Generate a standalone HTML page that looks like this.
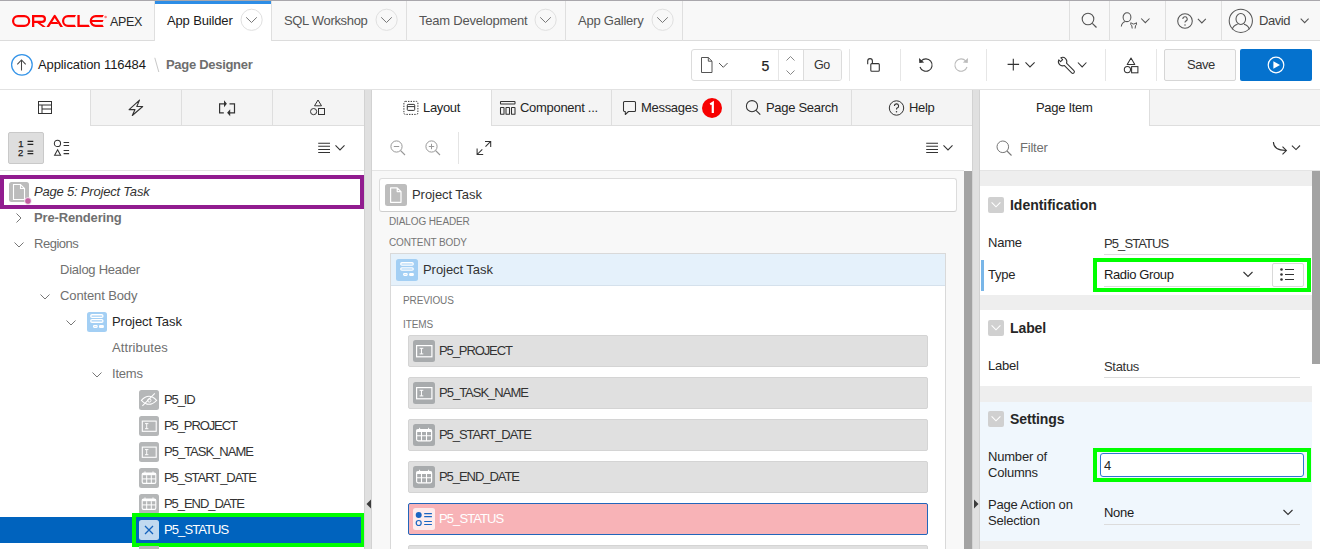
<!DOCTYPE html>
<html><head><meta charset="utf-8">
<style>
*{box-sizing:border-box;margin:0;padding:0}
html,body{width:1320px;height:549px;overflow:hidden;background:#fff;font-family:"Liberation Sans",sans-serif;font-size:13px;color:#262626}
.a{position:absolute}
.t{position:absolute;white-space:nowrap;line-height:16px;font-size:13px;letter-spacing:-0.2px;margin-top:1px}
svg{position:absolute;overflow:visible}
</style></head><body>

<!-- ============ HEADER ============ -->
<div class="a" style="left:0;top:0;width:1320px;height:41px;background:#f8f8f8;border-top:1px solid #a9a7ac;border-bottom:1px solid #dcdcdc"></div>
<!-- Oracle logo -->
<svg style="left:0;top:0" width="120" height="40" viewBox="0 0 120 40">
  <g fill="#ff0000" fill-rule="evenodd">
    <path d="M18 15 H24.3 A6 6 0 0 1 24.3 27 H18 A6 6 0 0 1 18 15 Z M18 17.2 A3.8 3.8 0 0 0 18 24.8 H24.3 A3.8 3.8 0 0 0 24.3 17.2 Z"/>
    <path d="M32 15 H42 A4 4 0 0 1 42 23 H40.4 L45.9 27 H42.7 L37.3 23 H34.3 V27 H32 Z M34.3 17.2 V20.8 H42 A1.8 1.8 0 0 0 42 17.2 Z"/>
    <path d="M46.4 27 L53.5 15.7 Q54.7 14 55.9 15.7 L63 27 H60.3 L54.7 18 L49.1 27 Z M52.2 21.9 H57.4 L58.6 24 H50.9 Z"/>
    <path d="M76 15 H68 A6 6 0 0 0 68 27 H76 L74.8 24.8 H68 A3.8 3.8 0 0 1 68 17.2 H74.8 Z"/>
    <path d="M77.4 15 H79.7 V24.8 H88.7 L89.9 27 H77.4 Z"/>
    <path d="M103.8 15 H95.7 A6 6 0 0 0 95.7 27 H103.8 L102.6 24.8 H95.7 A3.8 3.8 0 0 1 92 22.1 H102.7 L103.5 20 H92 A3.8 3.8 0 0 1 95.7 17.2 H102.6 Z"/>
  </g>
  <circle cx="105.6" cy="17" r="1.3" fill="#ff7a7a"/>
</svg>
<div class="t" style="left:110px;top:13px;color:#2a2a2a;font-size:12.5px;letter-spacing:-0.35px">APEX</div>

<!-- tabs -->
<div class="a" style="left:154px;top:1px;width:1px;height:40px;background:#dfdfdf"></div>
<div class="a" style="left:155px;top:1px;width:116px;height:40px;background:#fff"></div>
<div class="a" style="left:155px;top:1px;width:116px;height:3px;background:#2d8de6"></div>
<div class="a" style="left:271px;top:1px;width:1px;height:40px;background:#dfdfdf"></div>
<div class="a" style="left:406px;top:1px;width:1px;height:40px;background:#dfdfdf"></div>
<div class="a" style="left:565px;top:1px;width:1px;height:40px;background:#dfdfdf"></div>
<div class="a" style="left:682px;top:1px;width:1px;height:40px;background:#dfdfdf"></div>
<div class="t" style="left:167px;top:12px;color:#1a1a1a;letter-spacing:-0.15px">App Builder</div>
<div class="t" style="left:284px;top:12px;color:#555;letter-spacing:-0.33px">SQL Workshop</div>
<div class="t" style="left:419px;top:12px;color:#555;letter-spacing:-0.22px">Team Development</div>
<div class="t" style="left:578px;top:12px;color:#555;letter-spacing:-0.22px">App Gallery</div>
<!-- tab chevron circles -->
<svg style="left:241px;top:9px" width="22" height="22"><circle cx="10.6" cy="10.8" r="10.6" fill="none" stroke="#e0e0e0"/><path d="M5.2 8.3 L10.5 13.5 L15.8 8.3" fill="none" stroke="#777" stroke-width="1"/></svg>
<svg style="left:376px;top:9px" width="22" height="22"><circle cx="10.6" cy="10.8" r="10.6" fill="none" stroke="#e0e0e0"/><path d="M5.2 8.3 L10.5 13.5 L15.8 8.3" fill="none" stroke="#777" stroke-width="1"/></svg>
<svg style="left:535px;top:9px" width="22" height="22"><circle cx="10.6" cy="10.8" r="10.6" fill="none" stroke="#e0e0e0"/><path d="M5.2 8.3 L10.5 13.5 L15.8 8.3" fill="none" stroke="#777" stroke-width="1"/></svg>
<svg style="left:652px;top:9px" width="22" height="22"><circle cx="10.6" cy="10.8" r="10.6" fill="none" stroke="#e0e0e0"/><path d="M5.2 8.3 L10.5 13.5 L15.8 8.3" fill="none" stroke="#777" stroke-width="1"/></svg>

<!-- right header -->
<div class="a" style="left:1069px;top:1px;width:1px;height:40px;background:#dfdfdf"></div>
<div class="a" style="left:1109px;top:1px;width:1px;height:40px;background:#dfdfdf"></div>
<div class="a" style="left:1165px;top:1px;width:1px;height:40px;background:#dfdfdf"></div>
<div class="a" style="left:1221px;top:1px;width:1px;height:40px;background:#dfdfdf"></div>


<!-- header right icons -->
<svg style="left:1081px;top:12px" width="18" height="18"><circle cx="7" cy="7" r="5.8" fill="none" stroke="#555" stroke-width="1.1"/><path d="M11.3 11.3 L15.5 15.5" stroke="#555" stroke-width="1.2"/></svg>
<svg style="left:1115px;top:8px" width="40" height="24"><ellipse cx="12" cy="9.2" rx="3.9" ry="4.4" fill="none" stroke="#555" stroke-width="1.05"/><path d="M6.3 18.5 Q6.8 14.6 10.4 13.6" fill="none" stroke="#555" stroke-width="1.05"/><path d="M16 14.3 Q15 16.5 16.8 17.8 L17.2 20.5 M21.3 14.3 Q22.3 16.5 20.5 17.8 L20.1 20.5 M16.4 15.3 Q18.6 16.8 20.9 15.3" fill="none" stroke="#555" stroke-width="1"/><path d="M26.2 10.5 L30.3 14.7 L34.5 10.5" fill="none" stroke="#555" stroke-width="1.05"/></svg>
<svg style="left:1177px;top:12px" width="36" height="18"><circle cx="8" cy="9" r="7.3" fill="none" stroke="#555" stroke-width="1.05"/><path d="M5.8 7 A2.2 2.2 0 1 1 8.6 9.1 Q8 9.5 8 10.6" fill="none" stroke="#555" stroke-width="1.1"/><circle cx="8" cy="12.9" r="0.75" fill="#555"/><path d="M20.9 6.9 L24.85 10.9 L28.8 6.9" fill="none" stroke="#555" stroke-width="1.05"/></svg>
<svg style="left:1228px;top:8px" width="26" height="26"><circle cx="12.8" cy="12.8" r="11.6" fill="none" stroke="#555" stroke-width="1.05"/><ellipse cx="12.8" cy="11" rx="4.8" ry="5.5" fill="none" stroke="#555" stroke-width="1.05"/><path d="M4.3 21.3 Q5.2 17.2 9.6 16.2 M21.3 21.3 Q20.4 17.2 16 16.2" fill="none" stroke="#555" stroke-width="1.05"/></svg>
<div class="t" style="left:1259px;top:12px;color:#444;letter-spacing:-0.45px">David</div>
<svg style="left:1298px;top:14px" width="14" height="14"><path d="M2.7 4.7 L6.65 8.7 L10.6 4.7" fill="none" stroke="#555" stroke-width="1.05"/></svg>

<!-- ============ TOOLBAR ============ -->
<div class="a" style="left:0;top:89px;width:1320px;height:1px;background:#e2e2e2"></div>


<!-- app icon -->
<svg style="left:11px;top:54px" width="22" height="22"><circle cx="10.9" cy="10.8" r="10.3" fill="none" stroke="#3594e8" stroke-width="1.25"/><path d="M10.5 16.6 V6 M6.3 10.3 L10.5 6 L14.7 10.3" fill="none" stroke="#444" stroke-width="1.05"/></svg>
<div class="t" style="margin-top:0;left:38px;top:57px;color:#1a1a1a;letter-spacing:-0.1px">Application 116484</div>
<svg style="left:153.5px;top:57px" width="7" height="18"><path d="M0.8 0.8 L4.8 15" stroke="#c8c8c8" stroke-width="1"/></svg>
<div class="t" style="margin-top:0;left:166px;top:57px;color:#6e6e6e;font-weight:bold;letter-spacing:-0.3px">Page Designer</div>

<!-- page selector -->
<div class="a" style="left:691px;top:49px;width:151px;height:32px;border:1px solid #dcdcdc;border-radius:3px;background:#fff"></div>
<div class="a" style="left:778px;top:50px;width:1px;height:30px;background:#e6e6e6"></div>
<div class="a" style="left:803px;top:50px;width:38px;height:30px;background:#f8f8f8;border-left:1px solid #dcdcdc;border-radius:0 2px 2px 0"></div>
<svg style="left:700px;top:57px" width="30" height="17"><path d="M1.5 0.5 H8.3 L12 4.2 V15.5 H1.5 Z M8.3 0.5 V4.2 H12" fill="none" stroke="#555" stroke-width="1" stroke-linejoin="round"/><path d="M19 6 L23.3 10.3 L27.6 6" fill="none" stroke="#555" stroke-width="1"/></svg>
<div class="t" style="margin-top:1px;left:754px;top:57px;width:15px;text-align:right;font-size:14px;color:#222;-webkit-text-stroke:0.25px #222">5</div>
<svg style="left:783.5px;top:54.5px" width="14" height="22"><path d="M2.5 5.5 L6.5 1.5 L10.5 5.5 M2.5 15.5 L6.5 19.5 L10.5 15.5" fill="none" stroke="#888" stroke-width="1"/></svg>
<div class="t" style="margin-top:0;left:814px;top:57px;color:#333;font-size:12.5px;letter-spacing:-0.5px">Go</div>

<!-- separators -->
<div class="a" style="left:849px;top:49px;width:1px;height:32px;background:#e6e6e6"></div>
<div class="a" style="left:900px;top:49px;width:1px;height:32px;background:#e6e6e6"></div>
<div class="a" style="left:986px;top:49px;width:1px;height:32px;background:#e6e6e6"></div>
<div class="a" style="left:1105px;top:49px;width:1px;height:32px;background:#e6e6e6"></div>
<div class="a" style="left:1156px;top:49px;width:1px;height:32px;background:#e6e6e6"></div>

<!-- lock -->
<svg style="left:864px;top:56px" width="18" height="18"><path d="M3.7 8.2 V5 A2.35 2.35 0 0 1 8.4 5 V7.5" fill="none" stroke="#333" stroke-width="1.1"/><rect x="6.8" y="7.6" width="8.5" height="7.6" rx="1" fill="none" stroke="#333" stroke-width="1.1"/></svg>
<!-- undo -->
<svg style="left:917px;top:56px" width="18" height="18"><path d="M4.2 5 A6.2 6.2 0 1 1 3 11" fill="none" stroke="#333" stroke-width="1.1"/><path d="M2 2 L2.3 7 L7.2 6.4 Z" fill="#333"/></svg>
<!-- redo -->
<svg style="left:952px;top:56px" width="18" height="18"><path d="M13.8 5 A6.2 6.2 0 1 0 15 11" fill="none" stroke="#bbb" stroke-width="1.1"/><path d="M16 2 L15.7 7 L10.8 6.4 Z" fill="#bbb"/></svg>
<!-- plus/wrench/shapes -->
<svg style="left:990px;top:48px" width="160" height="34"><path d="M23.3 10.7 V22.4 M17.6 16.4 H29.1" stroke="#333" stroke-width="1.1" fill="none"/><path d="M35.5 14.3 L40 18.9 L44.6 14.3" fill="none" stroke="#333" stroke-width="1.05"/>
<path transform="translate(72.6 13.6) rotate(-45)" d="M-1.6 3.9 V14.4 A1.6 1.6 0 0 0 1.6 14.4 V3.9 A4.2 4.2 0 0 0 1.5 -3.92 V-1.4 H-1.5 V-3.92 A4.2 4.2 0 0 0 -1.6 3.9 Z" fill="none" stroke="#333" stroke-width="1.05" stroke-linejoin="round"/>
<path d="M87.9 14.5 L92.15 18.9 L96.4 14.5" fill="none" stroke="#333" stroke-width="1.05"/>
<path d="M141 10 L144.8 16.4 H137.2 Z" fill="none" stroke="#333" stroke-width="1.05" stroke-linejoin="round"/><circle cx="137.4" cy="21.6" r="3.1" fill="none" stroke="#333" stroke-width="1.05"/><rect x="141.6" y="18.6" width="6.3" height="6.2" fill="none" stroke="#333" stroke-width="1.05"/></svg>
<!-- save -->
<div class="a" style="left:1164px;top:49px;width:72px;height:32px;border:1px solid #d6d6d6;border-radius:2px;background:#f8f8f8"></div>
<div class="t" style="margin-top:0;left:1187px;top:57px;color:#333;letter-spacing:-0.5px">Save</div>
<!-- run -->
<div class="a" style="left:1240px;top:49px;width:72px;height:32px;border-radius:2px;background:#0572ce"></div>
<svg style="left:1267px;top:56px" width="20" height="18"><circle cx="9" cy="9" r="7.8" fill="none" stroke="#fff" stroke-width="1.2"/><path d="M6.4 5.3 L13 9 L6.4 12.7 Z" fill="#fff"/></svg>

<!-- ============ PANELS ============ -->

<!-- ===== LEFT PANEL ===== -->
<div class="a" style="left:0;top:90px;width:364px;height:36px;background:#f4f4f4;border-bottom:1px solid #dedede"></div>
<div class="a" style="left:0;top:90px;width:90px;height:36px;background:#fff"></div>
<div class="a" style="left:90px;top:90px;width:1px;height:36px;background:#dedede"></div>
<div class="a" style="left:181px;top:90px;width:1px;height:35px;background:#dedede"></div>
<div class="a" style="left:272px;top:90px;width:1px;height:35px;background:#dedede"></div>
<!-- tab icons -->
<svg style="left:37px;top:100px" width="16" height="16"><rect x="1.5" y="1.5" width="13" height="12" fill="none" stroke="#333" stroke-width="1"/><path d="M1.5 5 H14.5 M5 5 V13.5 M5 9 H14.5" fill="none" stroke="#333" stroke-width="1"/></svg>
<svg style="left:128px;top:99px" width="18" height="18"><path d="M11.5 1.1 L1.1 10.6 H7 L4.3 16.5 L14.7 7.5 H8.8 Z" fill="none" stroke="#333" stroke-width="1.1" stroke-linejoin="round"/></svg>
<svg style="left:217px;top:98px" width="20" height="20"><path d="M7.5 5.8 H2.6 V14.8 H6.8 M12.5 5.8 H17.5 V14.8 H12.8" fill="none" stroke="#333" stroke-width="1.2"/><path d="M7 2.3 L9.9 5.8 L7 9.3 Z M13.2 11.3 L10.1 14.8 L13.2 18.3 Z" fill="#333"/></svg>
<svg style="left:309px;top:99px" width="18" height="18"><path d="M9 1 L12.5 6.8 H5.5 Z" fill="none" stroke="#333" stroke-width="1"/><circle cx="4.6" cy="12.6" r="3.1" fill="none" stroke="#333" stroke-width="1"/><rect x="9.5" y="9.5" width="6" height="6" fill="none" stroke="#333" stroke-width="1"/></svg>
<!-- left toolbar -->
<div class="a" style="left:0;top:170px;width:364px;height:1px;background:#e4e4e4"></div>
<div class="a" style="left:8px;top:132px;width:36px;height:32px;background:#dedede;border:1px solid #c9c9c9;border-radius:2px"></div>
<svg style="left:16px;top:138px" width="22" height="20"><text x="2.3" y="8.7" font-family="Liberation Sans" font-size="9.5" fill="#222" stroke="#222" stroke-width="0.25">1</text><text x="2" y="17.9" font-family="Liberation Sans" font-size="9.5" fill="#222" stroke="#222" stroke-width="0.25">2</text><path d="M11.5 3.4 H17.3 M11.5 6.3 H17.3 M11.5 13 H17.3 M11.5 15.6 H17.3" stroke="#222" stroke-width="1.25"/></svg>
<svg style="left:53px;top:138px" width="22" height="20"><circle cx="4.45" cy="5.4" r="3.1" fill="none" stroke="#333" stroke-width="1.05"/><path d="M4.6 11.8 L7.6 17.3 H1.6 Z" fill="none" stroke="#333" stroke-width="1.05"/><path d="M10.6 4.5 H16.1 M10.6 7.4 H16.1 M10.6 12.4 H16.1 M10.6 15.6 H16.1" stroke="#333" stroke-width="1.05"/></svg>
<svg style="left:317px;top:140px" width="30" height="16"><path d="M1.2 3.2 H13 M1.2 6.3 H13 M1.2 9.4 H13 M1.2 12.5 H13" stroke="#333" stroke-width="1.05"/><path d="M18.5 5.3 L23 9.9 L27.5 5.3" fill="none" stroke="#333" stroke-width="1.05"/></svg>

<!-- tree -->
<div class="a" style="left:0;top:175px;width:364px;height:34px;border:4px solid #911c8f;background:#fff"></div>
<svg style="left:9px;top:182px" width="24" height="24"><rect x="0" y="0" width="20" height="20" rx="2.5" fill="#bcbcbc"/><path d="M4.5 2.5 H11.5 L15.5 6.5 V17.5 H4.5 Z M11.5 2.5 V6.5 H15.5" fill="none" stroke="#fff" stroke-width="1.1"/><circle cx="19" cy="19" r="3.4" fill="#c25ea0" stroke="#fff" stroke-width="0.8"/></svg>
<div class="t" style="left:34px;top:183px;color:#333;font-style:italic;letter-spacing:-0.2px">Page 5: Project Task</div>

<svg style="left:14px;top:212px" width="10" height="12"><path d="M2.5 1.5 L7 6 L2.5 10.5" fill="none" stroke="#777" stroke-width="1"/></svg>
<div class="t" style="left:34px;top:209px;color:#707070;font-weight:bold;letter-spacing:-0.15px">Pre-Rendering</div>
<svg style="left:13px;top:240px" width="12" height="10"><path d="M1.5 2.5 L6 7 L10.5 2.5" fill="none" stroke="#777" stroke-width="1"/></svg>
<div class="t" style="left:34px;top:235px;color:#707070;letter-spacing:-0.48px">Regions</div>
<div class="t" style="left:60px;top:261px;color:#707070;letter-spacing:-0.25px">Dialog Header</div>
<svg style="left:39px;top:292px" width="12" height="10"><path d="M1.5 2.5 L6 7 L10.5 2.5" fill="none" stroke="#777" stroke-width="1"/></svg>
<div class="t" style="left:60px;top:287px;color:#707070;letter-spacing:-0.12px">Content Body</div>
<svg style="left:65px;top:318px" width="12" height="10"><path d="M1.5 2.5 L6 7 L10.5 2.5" fill="none" stroke="#777" stroke-width="1"/></svg>
<svg style="left:87px;top:312px" width="20" height="20"><rect x="0" y="0" width="20" height="20" rx="2.5" fill="#a3cff4"/><g fill="none" stroke="#fff" stroke-width="1.3"><rect x="3.75" y="2.75" width="12.2" height="2.6" rx="1.3"/><rect x="3.75" y="7.65" width="12.2" height="2.6" rx="1.3"/><rect x="6.5" y="13.7" width="3.7" height="1.6" rx="0.8" stroke-width="1.2"/></g><rect x="12" y="13.1" width="4.9" height="2.8" rx="1" fill="#fff"/></svg>
<div class="t" style="left:112px;top:313px;color:#262626;letter-spacing:-0.06px">Project Task</div>
<div class="t" style="left:112px;top:339px;color:#707070;letter-spacing:0.1px">Attributes</div>
<svg style="left:91px;top:370px" width="12" height="10"><path d="M1.5 2.5 L6 7 L10.5 2.5" fill="none" stroke="#777" stroke-width="1"/></svg>
<div class="t" style="left:112px;top:365px;color:#707070;letter-spacing:-0.2px">Items</div>

<!-- items -->
<svg style="left:139px;top:390px" width="20" height="20"><rect width="20" height="20" rx="2.5" fill="#b5b7b8"/><path d="M2.4 10.3 Q10 2.3 17.6 10.3 Q10 18.3 2.4 10.3 Z" fill="none" stroke="#fff" stroke-width="1.05"/><circle cx="10.3" cy="10.4" r="1.7" fill="none" stroke="#fff" stroke-width="1"/><path d="M3.4 15.8 L15.8 3.4" stroke="#fff" stroke-width="1.05"/></svg>
<div class="t" style="left:164px;top:391px;color:#333;letter-spacing:-1.1px">P5_ID</div>
<svg style="left:139px;top:416px" width="20" height="20"><rect width="20" height="20" rx="2.5" fill="#b5b7b8"/><rect x="3.3" y="5.1" width="13.9" height="10.2" fill="none" stroke="#fff" stroke-width="1.1"/><path d="M6 7.6 H9.4 M7.7 7.6 V12.7 M6 12.7 H9.4" stroke="#fff" stroke-width="0.95"/></svg>
<div class="t" style="left:164px;top:417px;color:#333;letter-spacing:-1.1px">P5_PROJECT</div>
<svg style="left:139px;top:442px" width="20" height="20"><rect width="20" height="20" rx="2.5" fill="#b5b7b8"/><rect x="3.3" y="5.1" width="13.9" height="10.2" fill="none" stroke="#fff" stroke-width="1.1"/><path d="M6 7.6 H9.4 M7.7 7.6 V12.7 M6 12.7 H9.4" stroke="#fff" stroke-width="0.95"/></svg>
<div class="t" style="left:164px;top:443px;color:#333;letter-spacing:-1.0px">P5_TASK_NAME</div>
<svg style="left:139px;top:468px" width="20" height="20"><rect width="20" height="20" rx="2.5" fill="#b5b7b8"/><rect x="3.2" y="5" width="13.6" height="10.4" rx="1.3" fill="none" stroke="#fff" stroke-width="1.1"/><path d="M3.2 6.1 H16.8" stroke="#fff" stroke-width="2.2"/><path d="M7.7 7.2 V15.4 M12.3 7.2 V15.4 M3.2 10.9 H16.8" stroke="#fff" stroke-width="1"/><path d="M6 3.4 V5.9 M14 3.4 V5.9" stroke="#fff" stroke-width="0.9"/></svg>
<div class="t" style="left:164px;top:469px;color:#333;letter-spacing:-1.05px">P5_START_DATE</div>
<svg style="left:139px;top:494px" width="20" height="20"><rect width="20" height="20" rx="2.5" fill="#b5b7b8"/><rect x="3.2" y="5" width="13.6" height="10.4" rx="1.3" fill="none" stroke="#fff" stroke-width="1.1"/><path d="M3.2 6.1 H16.8" stroke="#fff" stroke-width="2.2"/><path d="M7.7 7.2 V15.4 M12.3 7.2 V15.4 M3.2 10.9 H16.8" stroke="#fff" stroke-width="1"/><path d="M6 3.4 V5.9 M14 3.4 V5.9" stroke="#fff" stroke-width="0.9"/></svg>
<div class="t" style="left:164px;top:495px;color:#333;letter-spacing:-1.05px">P5_END_DATE</div>
<!-- selected -->
<div class="a" style="left:0;top:517px;width:364px;height:26px;background:#0063be"></div>
<div class="a" style="left:132px;top:513px;width:233px;height:34px;border:4px solid #00ff00"></div>
<svg style="left:139px;top:520px" width="20" height="20"><rect width="20" height="20" rx="2.5" fill="#c1d9f0"/><path d="M6 6 L14 14 M14 6 L6 14" stroke="#1563bd" stroke-width="1.3"/></svg>
<div class="t" style="left:164px;top:521px;color:#fff;letter-spacing:-0.9px">P5_STATUS</div>
<div class="a" style="left:139px;top:546px;width:20px;height:4px;background:#b5b7b8"></div>


<!-- ===== MIDDLE PANEL ===== -->
<div class="a" style="left:372px;top:90px;width:600px;height:36px;background:#f4f4f4;border-bottom:1px solid #dedede"></div>
<div class="a" style="left:372px;top:90px;width:119px;height:36px;background:#fff"></div>
<div class="a" style="left:491px;top:90px;width:1px;height:36px;background:#dedede"></div>
<div class="a" style="left:611px;top:90px;width:1px;height:35px;background:#dedede"></div>
<div class="a" style="left:731px;top:90px;width:1px;height:35px;background:#dedede"></div>
<div class="a" style="left:851px;top:90px;width:1px;height:35px;background:#dedede"></div>
<svg style="left:402px;top:100px" width="18" height="17"><rect x="1.9" y="1.4" width="14" height="13" rx="1.5" fill="none" stroke="#333" stroke-width="1" stroke-dasharray="1.4 1.2"/><rect x="5.3" y="4.4" width="7.4" height="6" rx="0.8" fill="none" stroke="#333" stroke-width="1"/><path d="M5.3 6.6 H12.7" stroke="#333" stroke-width="1"/></svg>
<div class="t" style="margin-top:0;left:423px;top:100px;color:#262626;letter-spacing:-0.33px">Layout</div>
<svg style="left:499px;top:100px" width="18" height="17"><g fill="none" stroke="#333" stroke-width="1.05"><rect x="1.5" y="1.5" width="14.5" height="2.5" rx="0.5"/><rect x="1.5" y="7.5" width="3.5" height="6.8" rx="0.4"/><rect x="7" y="7.5" width="3.5" height="6.8" rx="0.4"/><rect x="12.5" y="7.5" width="3.5" height="6.8" rx="0.4"/></g></svg>
<div class="t" style="margin-top:0;left:520px;top:100px;color:#262626;letter-spacing:-0.3px">Component ...</div>
<svg style="left:622px;top:100px" width="16" height="17"><path d="M2.5 1.5 H12.5 A1 1 0 0 1 13.5 2.5 V10.5 A1 1 0 0 1 12.5 11.5 H6.5 L3.3 14.5 V11.5 H2.5 A1 1 0 0 1 1.5 10.5 V2.5 A1 1 0 0 1 2.5 1.5 Z" fill="none" stroke="#333" stroke-width="1.05" stroke-linejoin="round"/></svg>
<div class="t" style="margin-top:0;left:641px;top:100px;color:#262626;letter-spacing:-0.3px">Messages</div>
<svg style="left:701px;top:97px" width="22" height="22"><circle cx="11" cy="11" r="10" fill="#f70000"/><path d="M9.2 7.4 L11.8 5.8 V16" fill="none" stroke="#fff" stroke-width="2.2"/></svg>
<svg style="left:745px;top:99px" width="18" height="18"><circle cx="7" cy="7.2" r="5.6" fill="none" stroke="#333" stroke-width="1.05"/><path d="M11 11.3 L15.3 15.6" stroke="#333" stroke-width="1.1"/></svg>
<div class="t" style="margin-top:0;left:766px;top:100px;color:#262626;letter-spacing:-0.3px">Page Search</div>
<svg style="left:888px;top:99px" width="18" height="18"><circle cx="8.5" cy="9" r="7.2" fill="none" stroke="#333" stroke-width="1"/><path d="M6.4 7 A2.1 2.1 0 1 1 9.1 9 Q8.5 9.4 8.5 10.6" fill="none" stroke="#333" stroke-width="1.1"/><circle cx="8.5" cy="12.8" r="0.75" fill="#333"/></svg>
<div class="t" style="margin-top:0;left:909px;top:100px;color:#262626;letter-spacing:-0.3px">Help</div>

<div class="a" style="left:372px;top:170px;width:592px;height:1px;background:#e4e4e4"></div>
<svg style="left:390px;top:140px" width="17" height="17"><circle cx="6.5" cy="6.5" r="5.6" fill="none" stroke="#999" stroke-width="1"/><path d="M3.8 6.5 H9.2" stroke="#999" stroke-width="1"/><path d="M10.5 10.5 L15 15" stroke="#999" stroke-width="1.1"/></svg>
<svg style="left:425px;top:140px" width="17" height="17"><circle cx="6.5" cy="6.5" r="5.6" fill="none" stroke="#999" stroke-width="1"/><path d="M3.8 6.5 H9.2 M6.5 3.8 V9.2" stroke="#999" stroke-width="1"/><path d="M10.5 10.5 L15 15" stroke="#999" stroke-width="1.1"/></svg>
<div class="a" style="left:458px;top:132px;width:1px;height:32px;background:#e4e4e4"></div>
<svg style="left:476px;top:140px" width="16" height="16"><path d="M9 1.4 H14.7 V7 M14.7 1.4 L9.5 6.6 M1.1 8.5 V14.5 H7.2 M1.1 14.5 L6.3 9.3" fill="none" stroke="#333" stroke-width="1.05"/></svg>
<svg style="left:925px;top:140px" width="30" height="16"><path d="M1.2 3.2 H13 M1.2 6.3 H13 M1.2 9.4 H13 M1.2 12.5 H13" stroke="#333" stroke-width="1.05"/><path d="M18.5 5.3 L23 9.9 L27.5 5.3" fill="none" stroke="#333" stroke-width="1.05"/></svg>

<!-- canvas -->
<div class="a" style="left:372px;top:171px;width:592px;height:378px;background:#f8f8f8"></div>
<div class="a" style="left:964px;top:171px;width:8px;height:378px;background:#a3a3a3"></div>
<div class="a" style="left:379px;top:178px;width:578px;height:34px;background:#fff;border:1px solid #dcdcdc;border-bottom-color:#cecece;border-radius:3px"></div>
<svg style="left:385px;top:184px" width="22" height="22"><rect width="22" height="22" rx="2.5" fill="#bdbdbd"/><path d="M5.6 3.8 H12.2 L16 7.6 V18.3 H5.6 Z M12.2 3.8 V7.6 H16" fill="none" stroke="#fff" stroke-width="1.2" stroke-linejoin="round"/></svg>
<div class="t" style="left:412px;top:186px;color:#333;letter-spacing:-0.06px">Project Task</div>
<div class="t" style="left:389px;top:215px;color:#757575;font-size:10px;line-height:12px;letter-spacing:-0.12px">DIALOG HEADER</div>
<div class="t" style="left:389px;top:236px;color:#757575;font-size:10px;line-height:12px;letter-spacing:-0.12px">CONTENT BODY</div>
<div class="a" style="left:390px;top:253px;width:556px;height:296px;background:#fff;border:1px solid #d9d9d9;border-bottom:none"></div>
<div class="a" style="left:391px;top:254px;width:554px;height:32px;background:#e5f1fb;border-bottom:1px solid #d5e1ec"></div>
<svg style="left:396px;top:259px" width="22" height="22"><rect width="22" height="22" rx="2.5" fill="#a3cff4"/><g fill="none" stroke="#fff" stroke-width="1.3"><rect x="4.75" y="3.75" width="12.5" height="2.3" rx="1.15"/><rect x="4.75" y="8.85" width="12.5" height="2.3" rx="1.15"/><rect x="7.6" y="14.7" width="3.6" height="1.6" rx="0.8" stroke-width="1.2"/></g><rect x="13.1" y="14.1" width="4.8" height="2.8" rx="1.2" fill="#fff"/></svg>
<div class="t" style="left:423px;top:261px;color:#333;letter-spacing:-0.06px">Project Task</div>
<div class="t" style="left:403px;top:294px;color:#757575;font-size:10px;line-height:12px;letter-spacing:-0.12px">PREVIOUS</div>
<div class="t" style="left:403px;top:318px;color:#757575;font-size:10px;line-height:12px;letter-spacing:-0.12px">ITEMS</div>
<div class="a" style="left:408px;top:335px;width:520px;height:32px;background:#e0e0e0;border:1px solid #d4d4d4;border-radius:2px"></div>
<svg style="left:413px;top:340px" width="22" height="22"><rect width="22" height="22" rx="2.5" fill="#a8abad"/><rect x="3.6" y="5.6" width="15.3" height="11.2" fill="none" stroke="#fff" stroke-width="1.2"/><path d="M6.6 8.3 H10.3 M8.45 8.3 V13.9 M6.6 13.9 H10.3" stroke="#fff" stroke-width="1"/></svg>
<div class="t" style="margin-top:0;left:439px;top:343px;color:#333;letter-spacing:-1.1px">P5_PROJECT</div>
<div class="a" style="left:408px;top:377px;width:520px;height:32px;background:#e0e0e0;border:1px solid #d4d4d4;border-radius:2px"></div>
<svg style="left:413px;top:382px" width="22" height="22"><rect width="22" height="22" rx="2.5" fill="#a8abad"/><rect x="3.6" y="5.6" width="15.3" height="11.2" fill="none" stroke="#fff" stroke-width="1.2"/><path d="M6.6 8.3 H10.3 M8.45 8.3 V13.9 M6.6 13.9 H10.3" stroke="#fff" stroke-width="1"/></svg>
<div class="t" style="margin-top:0;left:439px;top:385px;color:#333;letter-spacing:-1.0px">P5_TASK_NAME</div>
<div class="a" style="left:408px;top:419px;width:520px;height:32px;background:#e0e0e0;border:1px solid #d4d4d4;border-radius:2px"></div>
<svg style="left:413px;top:424px" width="22" height="22"><rect width="22" height="22" rx="2.5" fill="#a8abad"/><rect x="3.6" y="5.6" width="15" height="11.2" rx="1.5" fill="none" stroke="#fff" stroke-width="1.2"/><path d="M3.6 6.8 H18.6" stroke="#fff" stroke-width="2.4"/><path d="M8.5 8 V16.8 M13.5 8 V16.8 M3.6 11.8 H18.6" stroke="#fff" stroke-width="1.1"/><path d="M6.6 3.8 V6.5 M15.6 3.8 V6.5" stroke="#fff" stroke-width="1"/></svg>
<div class="t" style="margin-top:0;left:439px;top:427px;color:#333;letter-spacing:-1.05px">P5_START_DATE</div>
<div class="a" style="left:408px;top:461px;width:520px;height:32px;background:#e0e0e0;border:1px solid #d4d4d4;border-radius:2px"></div>
<svg style="left:413px;top:466px" width="22" height="22"><rect width="22" height="22" rx="2.5" fill="#a8abad"/><rect x="3.6" y="5.6" width="15" height="11.2" rx="1.5" fill="none" stroke="#fff" stroke-width="1.2"/><path d="M3.6 6.8 H18.6" stroke="#fff" stroke-width="2.4"/><path d="M8.5 8 V16.8 M13.5 8 V16.8 M3.6 11.8 H18.6" stroke="#fff" stroke-width="1.1"/><path d="M6.6 3.8 V6.5 M15.6 3.8 V6.5" stroke="#fff" stroke-width="1"/></svg>
<div class="t" style="margin-top:0;left:439px;top:469px;color:#333;letter-spacing:-1.05px">P5_END_DATE</div>
<div class="a" style="left:408px;top:503px;width:520px;height:32px;background:#f8b3b7;border:1px solid #2266bb;border-radius:2px"></div>
<svg style="left:413px;top:508px" width="22" height="22"><rect width="22" height="22" rx="2.5" fill="#fdeced"/><circle cx="5.7" cy="6.9" r="3" fill="#1a66c2"/><circle cx="5.7" cy="15" r="2.5" fill="none" stroke="#1a66c2" stroke-width="1.2"/><path d="M11.2 5.6 H18.9 M11.2 8.6 H18.9 M11.2 13.5 H18.9 M11.2 16.5 H18.9" stroke="#1a66c2" stroke-width="1.2"/></svg>
<div class="t" style="margin-top:0;left:439px;top:511px;color:#fff;letter-spacing:-0.9px">P5_STATUS</div>
<div class="a" style="left:408px;top:545px;width:520px;height:10px;background:#e0e0e0;border:1px solid #d4d4d4;border-radius:2px"></div>


<!-- ===== RIGHT PANEL ===== -->
<div class="a" style="left:980px;top:90px;width:340px;height:36px;background:#f4f4f4;border-bottom:1px solid #dedede"></div>
<div class="a" style="left:980px;top:90px;width:169px;height:36px;background:#fff"></div>
<div class="a" style="left:1149px;top:90px;width:1px;height:36px;background:#dedede"></div>
<div class="t" style="margin-top:0;left:1036px;top:100px;color:#262626;letter-spacing:-0.3px">Page Item</div>
<svg style="left:996px;top:140px" width="17" height="17"><circle cx="6.8" cy="6.8" r="5.8" fill="none" stroke="#777" stroke-width="1"/><path d="M11 11 L15.5 15.5" stroke="#777" stroke-width="1.1"/></svg>
<div class="t" style="left:1020px;top:139px;color:#6f6f6f;letter-spacing:-0.2px">Filter</div>
<svg style="left:1265px;top:135px" width="40" height="24"><path d="M8.4 7.1 Q8.6 15.5 21 15.5" fill="none" stroke="#333" stroke-width="1.1"/><path d="M17.5 11.6 L21.4 15.5 L17.5 19.4" fill="none" stroke="#333" stroke-width="1.1"/><path d="M26.9 10.7 L31 14.6 L35 10.5" fill="none" stroke="#333" stroke-width="1.1"/></svg>
<div class="a" style="left:980px;top:170px;width:340px;height:1px;background:#e4e4e4"></div>
<div class="a" style="left:980px;top:171px;width:332px;height:378px;background:#eeeeee"></div>
<div class="a" style="left:1312px;top:171px;width:8px;height:193px;background:#a3a3a3"></div>
<div class="a" style="left:1312px;top:364px;width:8px;height:185px;background:#fff"></div>

<!-- identification -->
<div class="a" style="left:980px;top:186px;width:332px;height:109px;background:#fff"></div>
<div class="a" style="left:988px;top:197px;width:16px;height:16px;background:#d0d0d0;border-radius:2px"></div>
<svg style="left:988px;top:197px" width="16" height="16"><path d="M3.6 5.4 L8 9.8 L12.4 5.4" fill="none" stroke="#fff" stroke-width="1.1"/></svg>
<div class="t" style="margin-top:0;left:1010px;top:197px;color:#262626;font-size:14px;line-height:17px;font-weight:bold;letter-spacing:-0.03px">Identification</div>
<div class="t" style="left:988px;top:234px;color:#262626;letter-spacing:-0.2px">Name</div>
<div class="t" style="left:1104px;top:235px;color:#333;letter-spacing:-0.9px">P5_STATUS</div>
<div class="a" style="left:1104px;top:254px;width:196px;height:1px;background:#dcdcdc"></div>
<div class="a" style="left:981px;top:260px;width:3px;height:31px;background:#79b6e8"></div>
<div class="t" style="left:988px;top:266px;color:#262626;letter-spacing:-0.2px">Type</div>
<div class="a" style="left:1093px;top:258px;width:218px;height:34px;border:4px solid #00ff00"></div>
<div class="t" style="left:1104px;top:266px;color:#1a1a1a;letter-spacing:-0.38px">Radio Group</div>
<svg style="left:1242px;top:269px" width="14" height="12"><path d="M1.5 3 L6 7.5 L10.5 3" fill="none" stroke="#333" stroke-width="1.1"/></svg>
<div class="a" style="left:1104px;top:286px;width:156px;height:1px;background:#dcdcdc"></div>
<div class="a" style="left:1272px;top:263px;width:32px;height:24px;border:1px solid #d9d9d9;border-radius:2px;background:#fff"></div>
<svg style="left:1279px;top:267px" width="18" height="16"><circle cx="2.5" cy="2.5" r="1.3" fill="#333"/><circle cx="2.5" cy="7.5" r="1.3" fill="#333"/><circle cx="2.5" cy="12.5" r="1.3" fill="#333"/><path d="M6 2.5 H15 M6 7.5 H15 M6 12.5 H15" stroke="#333" stroke-width="1"/></svg>

<!-- label -->
<div class="a" style="left:980px;top:310px;width:332px;height:76px;background:#fff"></div>
<div class="a" style="left:988px;top:320px;width:16px;height:16px;background:#d0d0d0;border-radius:2px"></div>
<svg style="left:988px;top:320px" width="16" height="16"><path d="M3.6 5.4 L8 9.8 L12.4 5.4" fill="none" stroke="#fff" stroke-width="1.1"/></svg>
<div class="t" style="margin-top:0;left:1010px;top:320px;color:#262626;font-size:14px;line-height:17px;font-weight:bold;letter-spacing:-0.1px">Label</div>
<div class="t" style="margin-top:0;left:988px;top:358px;color:#262626;letter-spacing:-0.2px">Label</div>
<div class="t" style="left:1104px;top:358px;color:#333;letter-spacing:-0.3px">Status</div>
<div class="a" style="left:1104px;top:377px;width:196px;height:1px;background:#dcdcdc"></div>

<!-- settings -->
<div class="a" style="left:980px;top:402px;width:332px;height:139px;background:#f0f7fd"></div>
<div class="a" style="left:988px;top:411px;width:16px;height:16px;background:#d0d0d0;border-radius:2px"></div>
<svg style="left:988px;top:411px" width="16" height="16"><path d="M3.6 5.4 L8 9.8 L12.4 5.4" fill="none" stroke="#fff" stroke-width="1.1"/></svg>
<div class="t" style="margin-top:0;left:1010px;top:411px;color:#262626;font-size:14px;line-height:17px;font-weight:bold;letter-spacing:-0.1px">Settings</div>
<div class="t" style="left:988px;top:448px;color:#262626;letter-spacing:-0.2px;line-height:16px">Number of<br>Columns</div>
<div class="a" style="left:1093px;top:448px;width:218px;height:34px;border:4px solid #00ff00"></div>
<div class="a" style="left:1100px;top:453px;width:204px;height:24px;border:1px solid #2f78d2;border-radius:3px;background:#fff"></div>
<div class="t" style="left:1104px;top:457px;color:#262626">4</div>
<div class="t" style="left:988px;top:496px;color:#262626;letter-spacing:-0.2px;line-height:16px">Page Action on<br>Selection</div>
<div class="t" style="left:1104px;top:504px;color:#1a1a1a;letter-spacing:-0.3px">None</div>
<svg style="left:1282px;top:507px" width="14" height="12"><path d="M1.5 3 L6 7.5 L10.5 3" fill="none" stroke="#333" stroke-width="1.1"/></svg>
<div class="a" style="left:1104px;top:524px;width:196px;height:1px;background:#dcdcdc"></div>

<!-- splitters -->
<div class="a" style="left:364px;top:90px;width:8px;height:459px;background:#e0e0e0;border-left:1px solid #d2d2d2;border-right:1px solid #d2d2d2"></div>
<div class="a" style="left:972px;top:90px;width:8px;height:459px;background:#e0e0e0;border-left:1px solid #d2d2d2;border-right:1px solid #d2d2d2"></div>

<svg style="left:366px;top:499px" width="6" height="10"><path d="M5 0.5 V9.5 L0.5 5 Z" fill="#3c3c3c"/></svg>
<svg style="left:973px;top:499px" width="6" height="10"><path d="M1 0.5 V9.5 L5.5 5 Z" fill="#3c3c3c"/></svg>
</body></html>
